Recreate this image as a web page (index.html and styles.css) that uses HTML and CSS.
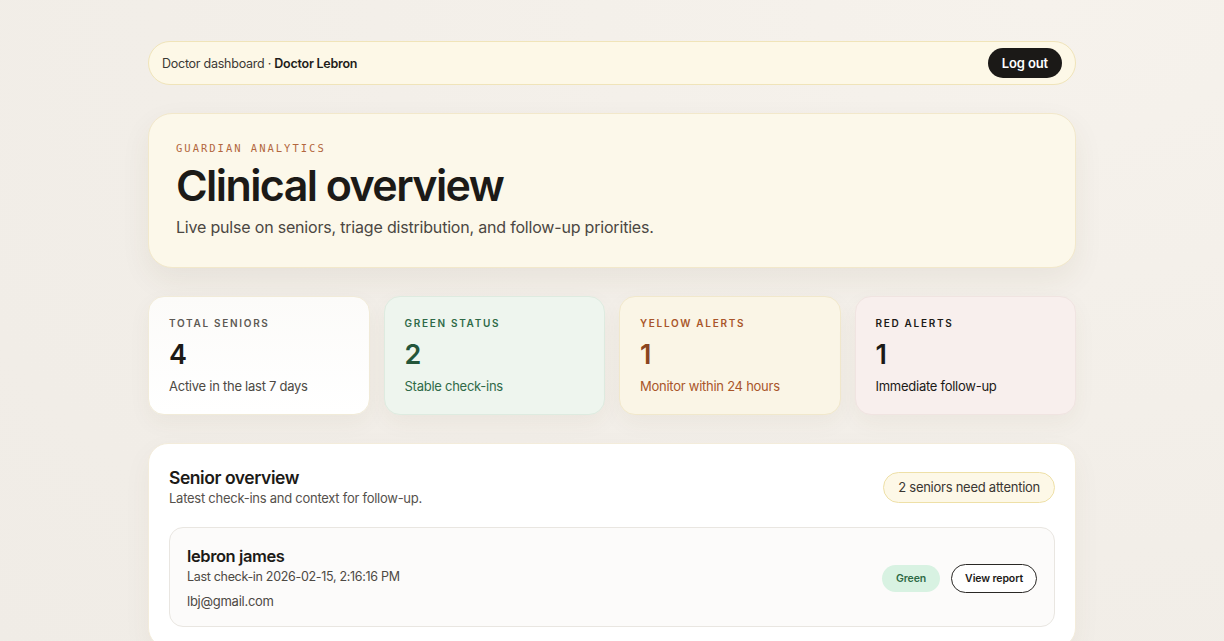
FILE: index.html
```html
<!DOCTYPE html>
<html lang="en">
<head>
<meta charset="utf-8">
<title>Doctor dashboard</title>
<link rel="stylesheet" href="styles.css">
</head>
<body>
<main class="page">
  <header class="topbar">
    <p class="topbar-text">Doctor dashboard · <strong>Doctor Lebron</strong></p>
    <button class="logout">Log out</button>
  </header>

  <section class="hero">
    <p class="eyebrow">GUARDIAN ANALYTICS</p>
    <h1 class="hero-title">Clinical overview</h1>
    <p class="hero-sub">Live pulse on seniors, triage distribution, and follow-up priorities.</p>
  </section>

  <section class="stats">
    <div class="stat stat-total">
      <p class="stat-label">TOTAL SENIORS</p>
      <p class="stat-num">4</p>
      <p class="stat-sub">Active in the last 7 days</p>
    </div>
    <div class="stat stat-green">
      <p class="stat-label">GREEN STATUS</p>
      <p class="stat-num">2</p>
      <p class="stat-sub">Stable check-ins</p>
    </div>
    <div class="stat stat-yellow">
      <p class="stat-label">YELLOW ALERTS</p>
      <p class="stat-num">1</p>
      <p class="stat-sub">Monitor within 24 hours</p>
    </div>
    <div class="stat stat-red">
      <p class="stat-label">RED ALERTS</p>
      <p class="stat-num">1</p>
      <p class="stat-sub">Immediate follow-up</p>
    </div>
  </section>

  <section class="overview">
    <div class="overview-head">
      <div>
        <h2 class="overview-title">Senior overview</h2>
        <p class="overview-sub">Latest check-ins and context for follow-up.</p>
      </div>
      <span class="attention">2 seniors need attention</span>
    </div>
    <div class="senior">
      <div class="senior-info">
        <h3 class="senior-name">lebron james</h3>
        <p class="senior-meta">Last check-in 2026-02-15, 2:16:16 PM</p>
        <p class="senior-email">lbj@gmail.com</p>
      </div>
      <div class="senior-actions">
        <span class="pill-green">Green</span>
        <button class="report">View report</button>
      </div>
    </div>
  </section>
</main>
</body>
</html>
```

FILE: styles.css
```css
* { box-sizing: border-box; }
html, body { margin: 0; padding: 0; }
body {
  background: radial-gradient(ellipse at 85% 0%, #f6f2ec 0%, #f2eee8 60%, #f0ece6 100%);
  font-family: Inter, "Noto Sans", sans-serif;
  color: #1c1a17;
  min-height: 641px;
}
p, h1, h2, h3 { margin: 0; }
.page {
  width: 928px;
  margin: 0 auto;
  padding-top: 41px;
  display: flex;
  flex-direction: column;
  gap: 28px;
}
.topbar {
  height: 44px;
  border: 1px solid #f0e4b9;
  background: #fdf8e7;
  border-radius: 999px;
  display: flex;
  align-items: center;
  justify-content: space-between;
  padding: 0 13px 0 13px;
}
.topbar-text {
  font-size: 12.5px;
  color: #3b3834;
  letter-spacing: -0.02em;
}
.topbar-text strong { font-weight: 600; color: #1f1d1a; }
.logout {
  font-family: inherit;
  background: #1b1917;
  color: #fff;
  border: none;
  border-radius: 999px;
  height: 30px;
  padding: 0 14px;
  font-size: 13px;
  font-weight: 600;
  letter-spacing: -0.01em;
}
.hero {
  background: #fcf8ea;
  border: 1px solid #f2e8cb;
  border-radius: 24px;
  padding: 27px 27px 28px;
  box-shadow: 0 12px 30px rgba(90, 70, 30, 0.07);
}
.eyebrow {
  font-family: "DejaVu Sans Mono", "Liberation Mono", monospace;
  font-size: 10.5px;
  line-height: 14px;
  letter-spacing: 0.19em;
  color: #b3673e;
}
.hero-title {
  margin-top: 6px;
  font-size: 43px;
  line-height: 48px;
  font-weight: 600;
  letter-spacing: -0.037em;
  color: #1c1a17;
}
.hero-sub {
  margin-top: 6px;
  font-size: 16px;
  line-height: 24px;
  color: #4b4742;
  letter-spacing: -0.012em;
}
.stats {
  display: grid;
  grid-template-columns: repeat(4, 1fr);
  gap: 14px;
}
.stat {
  border-radius: 16px;
  border: 1px solid #f1ebd9;
  padding: 19px 20px 18px;
  height: 119px;
  box-shadow: 0 8px 22px rgba(90, 70, 30, 0.05);
}
.stat-label {
  font-size: 10px;
  line-height: 14px;
  font-weight: 600;
  letter-spacing: 0.17em;
}
.stat-num {
  margin-top: 9px;
  font-size: 27px;
  line-height: 32px;
  font-weight: 600;
}
.stat-sub {
  margin-top: 5px;
  font-size: 13px;
  line-height: 20px;
  letter-spacing: -0.02em;
}
.stat-total { background: linear-gradient(180deg, #fcfbf9, #ffffff); }
.stat-total .stat-label { color: #5d5954; }
.stat-total .stat-num { color: #1c1a17; }
.stat-total .stat-sub { color: #4d4944; }
.stat-green { background: #eef5ee; border-color: #deebe0; }
.stat-green .stat-label { color: #2f6a48; }
.stat-green .stat-num { color: #24553a; }
.stat-green .stat-sub { color: #2f6a48; }
.stat-yellow { background: #faf5e6; border-color: #f1e8cc; }
.stat-yellow .stat-label { color: #a9552a; }
.stat-yellow .stat-num { color: #8a4420; }
.stat-yellow .stat-sub { color: #a9552a; }
.stat-red { background: #f8efed; border-color: #f0e4e1; }
.stat-red .stat-label, .stat-red .stat-num, .stat-red .stat-sub { color: #1c1a17; }
.overview {
  background: #ffffff;
  border: 1px solid #f3ecdb;
  border-radius: 20px;
  padding: 23px 20px 20px;
  box-shadow: 0 10px 28px rgba(90, 70, 30, 0.05);
}
.overview-head {
  display: flex;
  justify-content: space-between;
  align-items: center;
}
.overview-title {
  font-size: 17.5px;
  line-height: 22px;
  font-weight: 600;
  letter-spacing: -0.025em;
}
.overview-sub {
  font-size: 13px;
  line-height: 18px;
  color: #55514c;
  letter-spacing: -0.02em;
}
.attention {
  border: 1px solid #eee0a7;
  background: #fdf8e7;
  border-radius: 999px;
  height: 31px;
  padding: 0 14px;
  display: flex;
  align-items: center;
  font-size: 13px;
  color: #3a3632;
  letter-spacing: -0.02em;
}
.senior {
  margin-top: 20px;
  border: 1px solid #e9e6e1;
  background: #fcfbfa;
  border-radius: 14px;
  padding: 17px 17px 15px;
  display: flex;
  justify-content: space-between;
  align-items: center;
}
.senior-name {
  font-size: 16.5px;
  line-height: 22px;
  font-weight: 600;
  letter-spacing: -0.025em;
}
.senior-meta {
  font-size: 12.5px;
  line-height: 20px;
  color: #4d4944;
  letter-spacing: -0.025em;
}
.senior-email {
  margin-top: 4px;
  font-size: 13px;
  line-height: 20px;
  color: #4d4944;
  letter-spacing: -0.02em;
}
.senior-actions {
  display: flex;
  align-items: center;
  gap: 11px;
}
.pill-green {
  background: #d8f2e2;
  color: #2e6a45;
  border-radius: 999px;
  height: 27px;
  padding: 0 14px;
  display: flex;
  align-items: center;
  font-size: 10.5px;
  font-weight: 600;
  letter-spacing: -0.01em;
}
.report {
  font-family: inherit;
  background: #fff;
  border: 1px solid #2a2825;
  border-radius: 999px;
  height: 29px;
  padding: 0 13px;
  font-size: 10.5px;
  font-weight: 600;
  letter-spacing: -0.01em;
  color: #1c1a17;
}
```
